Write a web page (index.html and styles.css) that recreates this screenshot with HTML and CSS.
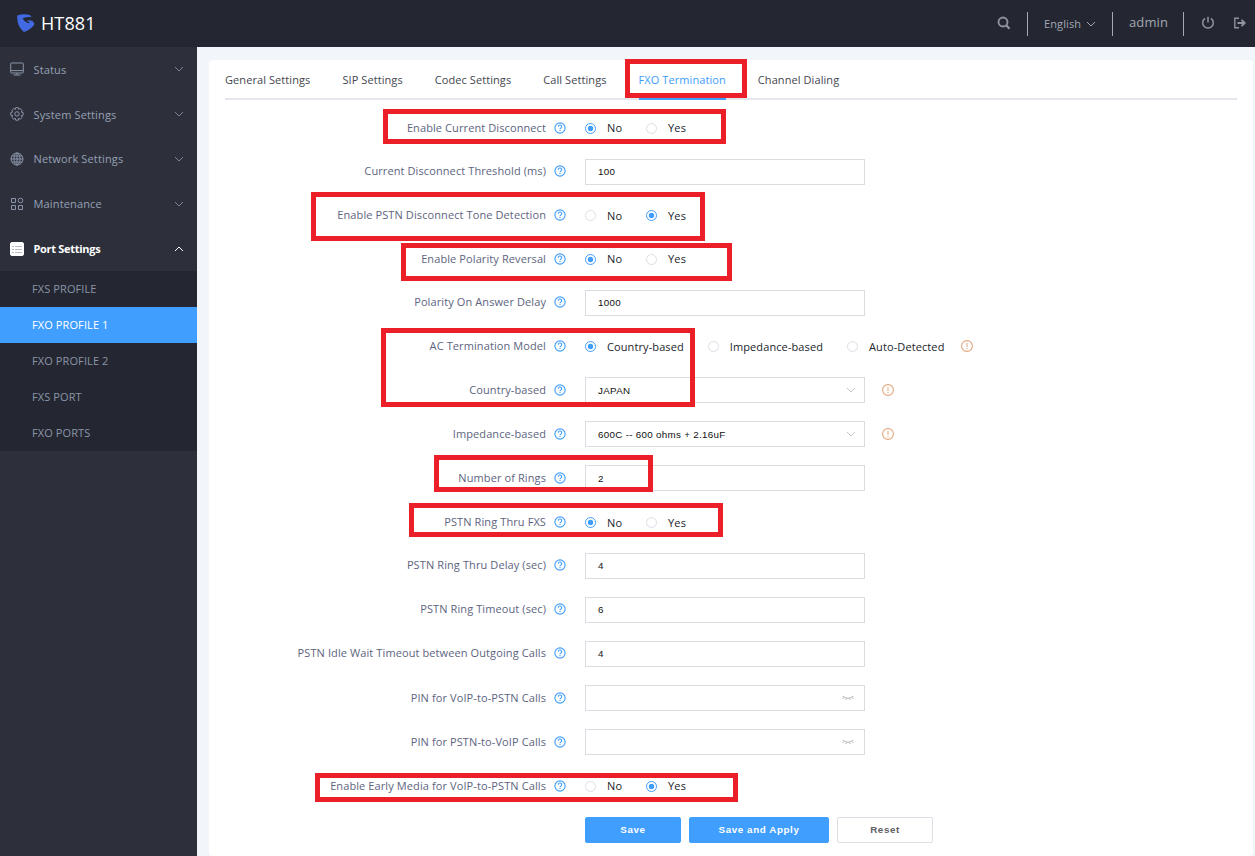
FILE: index.html
```html
<!DOCTYPE html>
<html lang="en">
<head>
	<meta charset="UTF-8">
	<title>HT881</title>
	<link rel="stylesheet" href="styles.css">
</head>
<body>
	<!-- shared icons -->
	<svg class="defs">
		<symbol id="help" viewBox="0 0 12 12">
			<circle cx="6" cy="6" r="5.100" fill="none" stroke="#409eff" stroke-width="1.100"/>
			<path d="M4.300 4.800a1.700 1.700 0 1 1 2.400 1.500q-.7.3-.7 1M6 8v1.100" fill="none" stroke="#409eff" stroke-width="1.100"/>
		</symbol>
		<symbol id="warn" viewBox="0 0 12 12">
			<circle cx="6" cy="6" r="5.400" fill="none" stroke="#e3a77e" stroke-width="1.100"/>
			<path d="M6 3v4M6 8v1.200" fill="none" stroke="#e3a77e"/>
		</symbol>
		<symbol id="down" viewBox="0 0 10 6">
			<path d="M1 1l4 4 4-4" fill="none" stroke="currentColor"/>
		</symbol>
		<symbol id="eye" viewBox="0 0 12 6">
			<path d="M.6 1Q6 5.400 11.400 1M2 2.400L.6 4M4.400 3.300L3.800 5M7.600 3.300L8.200 5M10 2.400L11.400 4" fill="none" stroke="#b4b7be"/>
		</symbol>
	</svg>

	<!-- top bar -->
	<header class="header">
		<svg class="logo" viewBox="0 0 18 18">
			<path d="M.3 1.500Q6-.5 13 1L14.500 3.200Q8 2.600 5.500 4.600Q7.500 8 11 9.200Q12.500 8.800 12.600 8L9.500 7Q12.500 5.500 15.500 7L17.700 10Q13.500 16 7 18Q-.5 12 .3 1.500z" fill="#4169e1"/>
		</svg>
		<h1 class="title">HT881</h1>
		<div class="tools">
			<svg class="search" viewBox="0 0 14 14"><circle cx="6" cy="6" r="4.500" fill="none" stroke="#8f939d" stroke-width="1.900"/><path d="M9.200 9.200l3.300 3.600" stroke="#8f939d" stroke-width="2.200"/></svg>
			<i class="line"></i>
			<span class="lang">English</span>
			<svg class="lang-arrow"><use href="#down"/></svg>
			<i class="line"></i>
			<span class="user">admin</span>
			<i class="line"></i>
			<svg class="power" viewBox="0 0 14 14"><path d="M4 2.400a5.300 5.300 0 1 0 6 0M7 .8v5.700" fill="none" stroke="#8f939d" stroke-width="1.500"/></svg>
			<svg class="logout" viewBox="0 0 14 14"><path d="M6 2.200H1.800v9.600H6" fill="none" stroke="#8f939d" stroke-width="1.400"/><path d="M4.500 7H11M8.500 3.800L11.700 7l-3.200 3.200" fill="none" stroke="#8f939d" stroke-width="1.900"/></svg>
		</div>
	</header>

	<div class="main">
		<!-- menu -->
		<nav class="sidebar">
			<div class="menu-item">
				<svg class="menu-icon" viewBox="0 0 14 14"><path d="M1.500 1h11q.8 0 .8.8v8.400q0 .8-.8.8h-11q-.8 0-.8-.8V1.800q0-.8.8-.8zM1 8.600h12M3.500 13h7M7 11v2"/></svg>
				<span>Status</span>
				<svg class="menu-arrow"><use href="#down"/></svg>
			</div>
			<div class="menu-item">
				<svg class="menu-icon" viewBox="0 0 14 14"><path d="M5.700.7h2.600l.4 1.700 1.500-.9 2 2-1 1.500 1.900.5v2.700l-1.800.5.9 1.600-2 1.900-1.500-.9-.4 1.900H5.700l-.4-1.900-1.500.9-2-1.900.9-1.600-1.900-.5V5.500l1.900-.5-.9-1.500 2-2 1.500.9z"/><circle cx="7" cy="6.900" r="2.200"/></svg>
				<span>System Settings</span>
				<svg class="menu-arrow"><use href="#down"/></svg>
			</div>
			<div class="menu-item">
				<svg class="menu-icon" viewBox="0 0 14 14"><circle cx="7" cy="7" r="6"/><ellipse cx="7" cy="7" rx="3" ry="6"/><path d="M7 1v12M1 7h12M2 4h10M2 10h10"/></svg>
				<span>Network Settings</span>
				<svg class="menu-arrow"><use href="#down"/></svg>
			</div>
			<div class="menu-item">
				<svg class="menu-icon" viewBox="0 0 14 14"><path d="M1.500 1.500h4v4h-4zM1.500 8.500h4v4h-4zM8.500 8.500h4v4h-4z"/><circle cx="10.500" cy="3.500" r="2.300"/></svg>
				<span>Maintenance</span>
				<svg class="menu-arrow"><use href="#down"/></svg>
			</div>
			<div class="menu-item opened">
				<svg class="menu-icon" viewBox="0 0 14 14"><rect x=".5" y=".5" width="13" height="13" rx="1.500" fill="#fff" stroke="#fff"/><path d="M2 4.500h2M5 4.500h7M2 7.500h2M5 7.500h7M2 10.500h2M5 10.500h7" stroke="#b9bbc0"/></svg>
				<span>Port Settings</span>
				<svg class="menu-arrow"><use href="#down"/></svg>
			</div>
			<ul class="submenu">
				<li>FXS PROFILE</li>
				<li class="current">FXO PROFILE 1</li>
				<li>FXO PROFILE 2</li>
				<li>FXS PORT</li>
				<li>FXO PORTS</li>
			</ul>
		</nav>

		<!-- content -->
		<section class="card">
			<ul class="tabs">
				<li>General Settings</li>
				<li>SIP Settings</li>
				<li>Codec Settings</li>
				<li>Call Settings</li>
				<li class="active">FXO Termination</li>
				<li>Channel Dialing</li>
			</ul>
			<div class="form">
				<div class="row short">
					<label>Enable Current Disconnect</label><svg class="help"><use href="#help"/></svg>
					<div class="radios"><i class="radio on"></i><span>No</span><i class="radio"></i><span>Yes</span></div>
				</div>
				<div class="row">
					<label>Current Disconnect Threshold (ms)</label><svg class="help"><use href="#help"/></svg>
					<div class="input">100</div>
				</div>
				<div class="row short">
					<label>Enable PSTN Disconnect Tone Detection</label><svg class="help"><use href="#help"/></svg>
					<div class="radios"><i class="radio"></i><span>No</span><i class="radio on"></i><span>Yes</span></div>
				</div>
				<div class="row short">
					<label>Enable Polarity Reversal</label><svg class="help"><use href="#help"/></svg>
					<div class="radios"><i class="radio on"></i><span>No</span><i class="radio"></i><span>Yes</span></div>
				</div>
				<div class="row">
					<label>Polarity On Answer Delay</label><svg class="help"><use href="#help"/></svg>
					<div class="input">1000</div>
				</div>
				<div class="row short">
					<label>AC Termination Model</label><svg class="help"><use href="#help"/></svg>
					<div class="radios"><i class="radio on"></i><span>Country-based</span><i class="radio"></i><span>Impedance-based</span><i class="radio"></i><span>Auto-Detected</span><svg class="warn"><use href="#warn"/></svg></div>
				</div>
				<div class="row">
					<label>Country-based</label><svg class="help"><use href="#help"/></svg>
					<div class="input">JAPAN<svg class="select-arrow"><use href="#down"/></svg></div>
					<svg class="warn"><use href="#warn"/></svg>
				</div>
				<div class="row">
					<label>Impedance-based</label><svg class="help"><use href="#help"/></svg>
					<div class="input">600C -- 600 ohms + 2.16uF<svg class="select-arrow"><use href="#down"/></svg></div>
					<svg class="warn"><use href="#warn"/></svg>
				</div>
				<div class="row">
					<label>Number of Rings</label><svg class="help"><use href="#help"/></svg>
					<div class="input">2</div>
				</div>
				<div class="row short">
					<label>PSTN Ring Thru FXS</label><svg class="help"><use href="#help"/></svg>
					<div class="radios"><i class="radio on"></i><span>No</span><i class="radio"></i><span>Yes</span></div>
				</div>
				<div class="row">
					<label>PSTN Ring Thru Delay (sec)</label><svg class="help"><use href="#help"/></svg>
					<div class="input">4</div>
				</div>
				<div class="row">
					<label>PSTN Ring Timeout (sec)</label><svg class="help"><use href="#help"/></svg>
					<div class="input">6</div>
				</div>
				<div class="row">
					<label>PSTN Idle Wait Timeout between Outgoing Calls</label><svg class="help"><use href="#help"/></svg>
					<div class="input">4</div>
				</div>
				<div class="row">
					<label>PIN for VoIP-to-PSTN Calls</label><svg class="help"><use href="#help"/></svg>
					<div class="input"><svg class="eye"><use href="#eye"/></svg></div>
				</div>
				<div class="row">
					<label>PIN for PSTN-to-VoIP Calls</label><svg class="help"><use href="#help"/></svg>
					<div class="input"><svg class="eye"><use href="#eye"/></svg></div>
				</div>
				<div class="row short">
					<label>Enable Early Media for VoIP-to-PSTN Calls</label><svg class="help"><use href="#help"/></svg>
					<div class="radios"><i class="radio"></i><span>No</span><i class="radio on"></i><span>Yes</span></div>
				</div>
			</div>
			<div class="buttons">
				<button class="btn primary">Save</button>
				<button class="btn primary wide">Save and Apply</button>
				<button class="btn">Reset</button>
			</div>
		</section>
	</div>

	<!-- red marks over the page -->
	<div class="mark mark-tab"></div>
	<div class="mark mark-disconnect"></div>
	<div class="mark mark-tone"></div>
	<div class="mark mark-polarity"></div>
	<div class="mark mark-country"></div>
	<div class="mark mark-rings"></div>
	<div class="mark mark-thru"></div>
	<div class="mark mark-media"></div>
</body>
</html>
```
FILE: styles.css
```css
*{
	padding: 0;
	margin: 0;
	box-sizing: border-box;
}
body{
	position: relative;
	height: 856px;
	overflow: hidden;
	background: #f2f6fa;
	font: 11px/16px "Open Sans", sans-serif;
	letter-spacing: .1px;
	white-space: nowrap;
}
ul{
	list-style: none;
}
svg{
	display: block;
	flex: none;
}
.defs{
	position: absolute;
	width: 0;
	height: 0;
}
/*top bar*/
.header{
	display: flex;
	align-items: center;
	height: 47px;
	padding: 0 8px 0 17px;
	background: #242731;
	color: #a3a8b4;
}
.logo{
	width: 18px;
	height: 18px;
	margin-top: -2px;
}
.title{
	margin: -2px 0 0 6px;
	color: #fff;
	font-size: 18px;
	font-weight: 400;
	letter-spacing: .1px;
}
.tools{
	display: flex;
	align-items: center;
	margin-left: auto;
	height: 46px;
}
.search{
	width: 14px;
	height: 14px;
	margin: -1px 16.5px 0 0;
}
.line{
	width: 1px;
	height: 24px;
	background: #a3a8b4;
}
.lang{
	width: 38px;
	margin: 0 4px 0 16px;
}
.lang-arrow{
	width: 10px;
	height: 6px;
	margin: 1px 16px 0 0;
}
.user{
	width: 38px;
	margin: -3px 16px 0;
	font-size: 13px;
}
.power{
	width: 14px;
	height: 14px;
	margin: -1px 18px 0 17px;
}
.logout{
	width: 14px;
	height: 14px;
	margin-top: -1px;
}
.main{
	display: flex;
	height: 809px;
}
/*menu*/
.sidebar{
	flex: none;
	width: 197px;
	background: #2d303b;
	color: #8b94a8;
}
.menu-item{
	display: flex;
	align-items: center;
	height: 44.8px;
	padding: 0 13.5px 0 9.5px;
	color: #97a0b4;
	letter-spacing: .15px;
}
.menu-item span{
	padding-top: 1px;
}
.menu-icon{
	width: 14px;
	height: 14px;
	margin-right: 10px;
	fill: none;
	stroke: #8b94a8;
}
.menu-arrow{
	width: 10px;
	height: 6px;
	margin-left: auto;
	color: #7c8497;
}
.opened{
	color: #fff;
	font-weight: 700;
	letter-spacing: -.3px;
}
.opened .menu-arrow{
	color: #fff;
	transform: rotate(180deg);
}
.submenu{
	background: #242731;
	letter-spacing: .1px;
}
.submenu li{
	height: 36px;
	padding-left: 32px;
	line-height: 36px;
}
.submenu .current{
	background: #409eff;
	color: #fff;
}
/*content*/
.card{
	flex: 1;
	margin: 13px 2px 0 12px;
	padding: 0 16px;
	border-radius: 4px;
	background: #fff;
}
.tabs{
	display: flex;
	gap: 32px;
	height: 40px;
	border-bottom: 2px solid #e4e7ed;
	color: #44474f;
	line-height: 40px;
	letter-spacing: .08px;
}
.tabs .active{
	height: 40px;
	border-bottom: 2px solid #409eff;
	color: #409eff;
}
.form{
	padding-top: 6.3px;
}
.row{
	display: flex;
	align-items: center;
	height: 44.1px;
}
.short{
	height: 43.4px;
	padding-top: 1px;
}
.row label{
	width: 321px;
	padding-bottom: 1px;
	color: #5d6480;
	text-align: right;
}
.help{
	width: 12px;
	height: 12px;
	margin: -1px 19px 0 8px;
}
.input{
	display: flex;
	align-items: center;
	justify-content: space-between;
	width: 280px;
	height: 26px;
	padding: 0 8px 0 12px;
	border: 1px solid #d9dce1;
	color: #111;
	font: 9.8px "Liberation Sans", Arial, sans-serif;
	letter-spacing: .3px;
}
.select-arrow{
	width: 10px;
	height: 6px;
	color: #c0c4cc;
}
.eye{
	width: 12px;
	height: 6px;
	margin: 0 2px 0 auto;
}
.warn{
	width: 12px;
	height: 12px;
	margin: -1px 0 0 17px;
}
.input + .warn{
	margin: 0 0 0 16.5px;
}
.radios{
	display: flex;
	align-items: center;
	color: #22252c;
}
.radio{
	width: 11px;
	height: 11px;
	margin-right: 11px;
	border: 1px solid #dcdfe6;
	border-radius: 50%;
}
.radio.on{
	border-color: #409eff;
	background: radial-gradient(#409eff 2.4px, #fff 3.1px);
}
.radios span{
	min-width: 15px;
	margin-right: 24px;
}
.radios span:last-of-type{
	margin-right: 0;
}
/*buttons*/
.buttons{
	display: flex;
	gap: 8px;
	padding: 9.3px 0 0 360px;
}
.btn{
	width: 96px;
	height: 26px;
	border: 1px solid #dcdfe6;
	border-radius: 2px;
	background: #fff;
	color: #606266;
	font: bold 9.8px "Liberation Sans", Arial, sans-serif;
	letter-spacing: .6px;
}
.primary{
	border-color: #409eff;
	background: #409eff;
	color: #fff;
}
.wide{
	width: 140px;
}
/*red marks*/
.mark{
	position: absolute;
	border: 5px solid #ea1f27;
}
.mark-tab{
	left: 625px;
	top: 59px;
	width: 122px;
	height: 39px;
}
.mark-disconnect{
	left: 383px;
	top: 109px;
	width: 343px;
	height: 35px;
}
.mark-tone{
	left: 311px;
	top: 192px;
	width: 394px;
	height: 49px;
}
.mark-polarity{
	left: 401px;
	top: 243px;
	width: 331px;
	height: 38px;
}
.mark-country{
	left: 381px;
	top: 328px;
	width: 314px;
	height: 79px;
}
.mark-rings{
	left: 434px;
	top: 455px;
	width: 219px;
	height: 37px;
}
.mark-thru{
	left: 409px;
	top: 503px;
	width: 314px;
	height: 34px;
}
.mark-media{
	left: 315px;
	top: 773px;
	width: 423px;
	height: 29px;
}
```
